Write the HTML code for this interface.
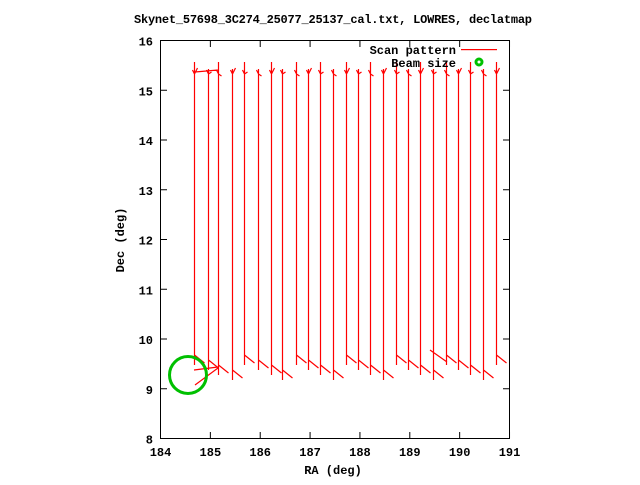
<!DOCTYPE html>
<html><head><style>
body{margin:0;background:#fff;width:640px;height:480px;overflow:hidden}
svg text{font-family:"Liberation Mono","DejaVu Sans Mono",monospace;font-weight:bold;font-size:12px;fill:#000}
</style></head><body>
<svg id="s" width="640" height="480" xmlns="http://www.w3.org/2000/svg">
<text x="333" y="23" text-anchor="middle" textLength="398">Skynet_57698_3C274_25077_25137_cal.txt, LOWRES, declatmap</text>
<g id="ticks" stroke="#000" stroke-width="1" fill="none"></g>
<rect x="160.5" y="40.5" width="349" height="398" fill="none" stroke="#000"/>
<g id="lab"></g>
<text x="333" y="474" text-anchor="middle">RA (deg)</text>
<text transform="translate(124,240) rotate(-90)" text-anchor="middle">Dec (deg)</text>
<g id="red" stroke="#ff0000" stroke-width="1.2" fill="none"></g>
<text x="456" y="54" text-anchor="end">Scan pattern</text>
<rect x="461" y="49" width="36" height="1.2" fill="#ff0000"/>
<text x="456" y="67" text-anchor="end">Beam size</text>
<circle cx="479" cy="62" r="3" fill="none" stroke="#00c000" stroke-width="3"/>
<circle cx="188" cy="375" r="18.5" fill="none" stroke="#00c000" stroke-width="3"/>
</svg>
<script>
(function(){
var N="http://www.w3.org/2000/svg",t=document.getElementById('ticks'),l=document.getElementById('lab'),r=document.getElementById('red');
function el(p,tag,a,txt){var e=document.createElementNS(N,tag);for(var k in a)e.setAttribute(k,a[k]);if(txt)e.textContent=txt;p.appendChild(e);return e;}
for(var i=0;i<=7;i++){var x=160.5+i*49.86;el(t,'line',{x1:x,y1:438,x2:x,y2:432});el(t,'line',{x1:x,y1:41,x2:x,y2:47});el(l,'text',{x:x,y:456,'text-anchor':'middle'},String(184+i));}
for(var j=0;j<=8;j++){var y=438.5-j*49.75;el(t,'line',{x1:161,y1:y,x2:167,y2:y});el(t,'line',{x1:509,y1:y,x2:503,y2:y});el(l,'text',{x:153,y:y+5,'text-anchor':'end'},String(8+j));}
var xs=[194,208,218,232,244,258,271,282,296,308,320,333,346,358,370,383,396,408,420,433,446,458,470,483,496];
var d="";
for(var k=0;k<xs.length;k++){var x=xs[k]+0.5,tp=62+(k*7%14),bt=365+(k*5%20);
d+="M"+x+","+tp+"L"+x+","+bt+" ";
d+="M"+(x-2)+",70L"+x+",74L"+(x+3)+","+(68+k%3*4)+" ";
d+="M"+x+","+(bt-10)+"L"+(x+10)+","+(bt-2)+" ";}
d+="M195,72L218,70 M194,370L218,367 M430,350L447,362 M195,385L218,368";
el(r,'path',{d:d});
})();
</script>
</body></html>
